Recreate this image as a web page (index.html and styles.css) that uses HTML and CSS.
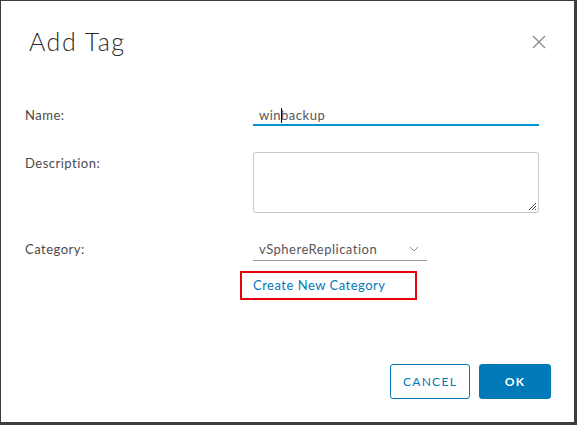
FILE: index.html
```html
<!DOCTYPE html>
<html>
<head>
<meta charset="utf-8">
<link rel="stylesheet" href="styles.css">
</head>
<body>
<div class="dialog">
  <div class="header">
    <h1 class="title">Add Tag</h1>
    <svg class="close" width="14" height="14" viewBox="0 0 14 14"><path d="M1 1 L13 13 M13 1 L1 13" stroke="#8c8c8c" stroke-width="1.4" fill="none"/></svg>
  </div>
  <div class="form">
    <div class="label l-name">Name:</div>
    <div class="input focused"><span>win</span><span class="caret"></span><span>backup</span></div>
    <div class="label l-desc">Description:</div>
    <div class="textarea">
      <svg class="grip" width="9" height="9" viewBox="0 0 9 9"><path d="M8 1 L1 8 M8 4 L4 8 M8 7 L7 8" stroke="#555" stroke-width="1" fill="none"/></svg>
    </div>
    <div class="label l-cat">Category:</div>
    <div class="select"><span>vSphereReplication</span>
      <svg class="chev" width="10" height="6" viewBox="0 0 10 6"><path d="M1 1 L5 5 L9 1" stroke="#8c8c8c" stroke-width="1" fill="none"/></svg>
    </div>
    <div></div>
    <div class="linkrow"><span class="highlight"><a class="link">Create New Category</a></span></div>
  </div>
  <div class="footer">
    <button class="btn btn-outline">CANCEL</button>
    <button class="btn btn-primary">OK</button>
  </div>
</div>
</body>
</html>
```
FILE: styles.css
```css
html, body { margin: 0; padding: 0; }
body {
  background: #3d3d3d;
  width: 577px;
  height: 425px;
  overflow: hidden;
  font-family: Lato, "Open Sans", "Liberation Sans", sans-serif;
}
.dialog {
  margin: 1px 3px 0 1px;
  width: 573px;
  height: 421px;
  background: #fff;
  box-sizing: border-box;
  display: flex;
  flex-direction: column;
}
.header {
  display: flex;
  justify-content: space-between;
  align-items: center;
  padding: 24px 28px 0 28px;
  height: 32px;
}
.title {
  margin: 0;
  font-size: 25px;
  font-weight: 300;
  color: #2b2b2b;
  letter-spacing: 1.5px;
}
.close { margin-top: 2px; }
.form {
  display: grid;
  grid-template-columns: 228px 286px;
  padding: 45px 0 0 24px;
  row-gap: 0;
  font-size: 13px;
  color: #565656;
  letter-spacing: 0.5px;
}
.label { color: #4a4a4a; }
.l-name { height: 24px; line-height: 26px; }
.l-desc { margin-top: 26px; padding-top: 3px; }
.l-cat { margin-top: 24px; line-height: 24px; }
.input {
  height: 24px;
  box-sizing: border-box;
  border-bottom: 2px solid #0094d2;
  padding-left: 6px;
  line-height: 26px;
  color: #565656;
  font-size: 13px;
}
.caret {
  display: inline-block;
  width: 1px;
  height: 15px;
  background: #000;
  vertical-align: -3px;
  margin-right: -1px;
}
.textarea {
  margin-top: 26px;
  height: 61px;
  box-sizing: border-box;
  border: 1px solid #c8c8c8;
  border-radius: 3px;
  position: relative;
}
.grip { position: absolute; right: 1px; bottom: 1px; }
.select {
  margin-top: 24px;
  width: 174px;
  height: 24px;
  box-sizing: border-box;
  border-bottom: 1px solid #9a9a9a;
  padding: 0 8px 0 6px;
  display: flex;
  align-items: center;
  justify-content: space-between;
  color: #565656;
}
.linkrow { margin-top: 10px; }
.highlight {
  display: inline-block;
  margin-left: -13px;
  border: 2px solid #e8000b;
  padding: 5px 30px 5px 11px;
  line-height: 15px;
}
.link { color: #0079b8; font-size: 13px; }
.footer {
  margin-top: auto;
  display: flex;
  justify-content: flex-end;
  gap: 9px;
  padding: 0 23px 23px 0;
}
.btn {
  height: 35px;
  box-sizing: border-box;
  border-radius: 3px;
  font-family: Lato, "Open Sans", sans-serif;
  font-size: 12px;
  letter-spacing: 1.3px;
  padding: 0;
  cursor: pointer;
}
.btn-outline {
  width: 80px;
  border: 1px solid #0079b8;
  background: #fff;
  color: #0079b8;
}
.btn-primary {
  width: 72px;
  border: 1px solid #0079b8;
  background: #0079b8;
  color: #fff;
  font-weight: 700;
}
```
